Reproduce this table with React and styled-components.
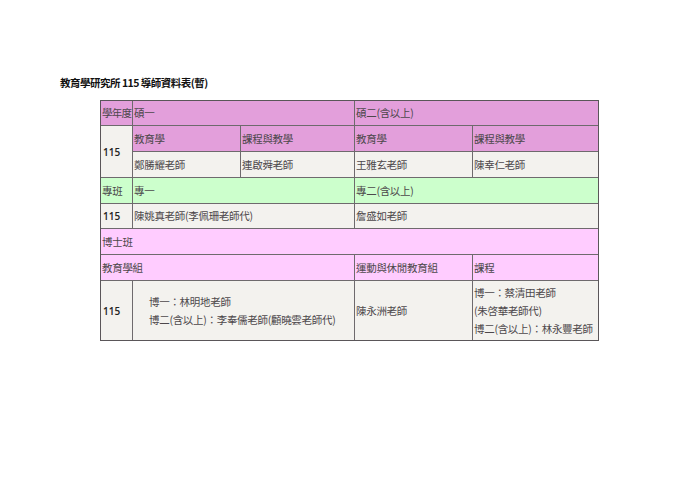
import React from "react";
import styled, { createGlobalStyle } from "styled-components";

const GlobalStyle = createGlobalStyle`
  body {
    margin: 0;
    background: #ffffff;
    font-family: "Noto Sans CJK TC", "Noto Sans", sans-serif;
  }
`;

const Page = styled.div`
  width: 700px;
  height: 495px;
  padding: 76px 0 0 60px;
  box-sizing: border-box;
`;

const Title = styled.h1`
  margin: 0 0 10px 0;
  font-size: 10.5px;
  line-height: 14px;
  font-weight: 700;
  color: #111;
  letter-spacing: -0.5px;
`;

const Table = styled.div`
  margin-left: 40px;
  width: 499px;
  display: grid;
  grid-template-columns: 31px 107px 113px 117px 125px;
  grid-template-rows: 24px 25px 25px 25px 24px 25px 25px 59px;
  gap: 1px;
  background: #6e6a6d;
  border: 1px solid #5a5659;
  box-sizing: border-box;
`;

const bg = {
  purple: "#e39fdb",
  cream: "#f3f2ee",
  green: "#ccffcc",
  pink: "#ffccff",
};

const Cell = styled.div`
  background: ${(p) => bg[p.$tone || "cream"]};
  grid-column: ${(p) => p.$col || "auto"};
  grid-row: ${(p) => p.$row || "auto"};
  display: flex;
  flex-direction: column;
  justify-content: center;
  padding: ${(p) => (p.$indent ? "0 0 0 16px" : "0 0 0 1px")};
  font-size: 10.5px;
  line-height: 18px;
  color: #4d484b;
  white-space: nowrap;
  overflow: hidden;
  letter-spacing: ${(p) => (p.$tight ? "-0.8px" : "-0.3px")};
`;

const Year = styled(Cell)`
  font-family: "Open Sans", "Liberation Sans", sans-serif;
  font-weight: 600;
  font-size: 10px;
  color: #222;
  padding-left: 2px;
  letter-spacing: 0;
`;

export default function App() {
  return (
    <>
      <GlobalStyle />
      <Page>
        <Title>教育學研究所 115 導師資料表(暫)</Title>
        <Table>
          <Cell $tone="purple" $tight>學年度</Cell>
          <Cell $tone="purple" $col="span 2">碩一</Cell>
          <Cell $tone="purple" $col="span 2">碩二(含以上)</Cell>

          <Year $row="span 2">115</Year>
          <Cell $tone="purple">教育學</Cell>
          <Cell $tone="purple">課程與教學</Cell>
          <Cell $tone="purple">教育學</Cell>
          <Cell $tone="purple">課程與教學</Cell>
          <Cell>鄭勝耀老師</Cell>
          <Cell>連啟舜老師</Cell>
          <Cell>王雅玄老師</Cell>
          <Cell>陳幸仁老師</Cell>

          <Cell $tone="green">專班</Cell>
          <Cell $tone="green" $col="span 2">專一</Cell>
          <Cell $tone="green" $col="span 2">專二(含以上)</Cell>

          <Year>115</Year>
          <Cell $col="span 2">陳姚真老師(李佩珊老師代)</Cell>
          <Cell $col="span 2">詹盛如老師</Cell>

          <Cell $tone="pink" $col="span 5">博士班</Cell>

          <Cell $tone="pink" $col="span 3">教育學組</Cell>
          <Cell $tone="pink">運動與休閒教育組</Cell>
          <Cell $tone="pink">課程</Cell>

          <Year>115</Year>
          <Cell $col="span 2" $indent>
            <span>博一：林明地老師</span>
            <span>博二(含以上)：李奉儒老師(顧曉雲老師代)</span>
          </Cell>
          <Cell>陳永洲老師</Cell>
          <Cell>
            <span>博一：蔡清田老師</span>
            <span>(朱啓華老師代)</span>
            <span>博二(含以上)：林永豐老師</span>
          </Cell>
        </Table>
      </Page>
    </>
  );
}
